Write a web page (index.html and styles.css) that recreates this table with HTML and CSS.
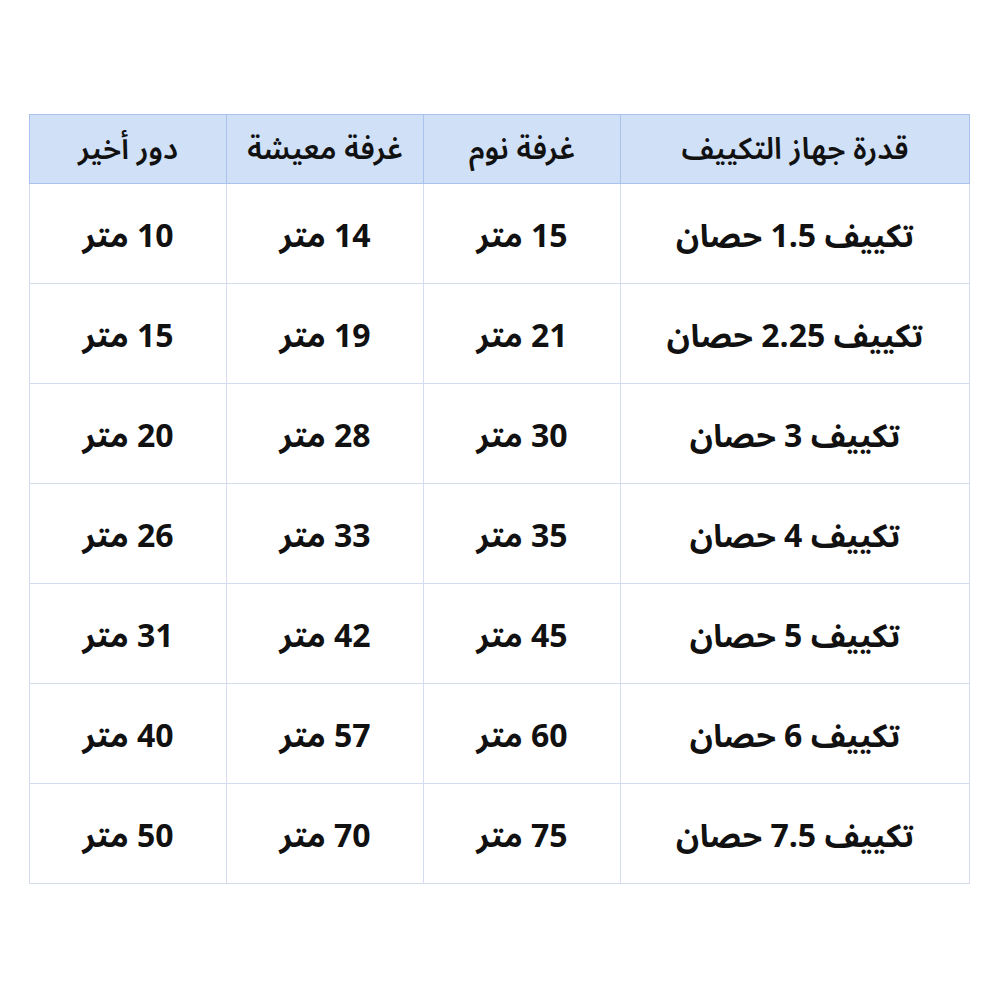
FILE: index.html
```html
<!DOCTYPE html>
<html lang="ar" dir="rtl">
<head>
<meta charset="utf-8">
<link rel="stylesheet" href="styles.css">
</head>
<body>
<div class="page">
<table class="ac-table">
  <colgroup>
    <col class="c-main"><col class="c-sub"><col class="c-sub"><col class="c-sub">
  </colgroup>
  <thead>
    <tr><th>قدرة جهاز التكييف</th><th>غرفة نوم</th><th>غرفة معيشة</th><th>دور أخير</th></tr>
  </thead>
  <tbody>
    <tr><td>تكييف 1.5 حصان</td><td>15 متر</td><td>14 متر</td><td>10 متر</td></tr>
    <tr><td>تكييف 2.25 حصان</td><td>21 متر</td><td>19 متر</td><td>15 متر</td></tr>
    <tr><td>تكييف 3 حصان</td><td>30 متر</td><td>28 متر</td><td>20 متر</td></tr>
    <tr><td>تكييف 4 حصان</td><td>35 متر</td><td>33 متر</td><td>26 متر</td></tr>
    <tr><td>تكييف 5 حصان</td><td>45 متر</td><td>42 متر</td><td>31 متر</td></tr>
    <tr><td>تكييف 6 حصان</td><td>60 متر</td><td>57 متر</td><td>40 متر</td></tr>
    <tr><td>تكييف 7.5 حصان</td><td>75 متر</td><td>70 متر</td><td>50 متر</td></tr>
  </tbody>
</table>
</div>
</body>
</html>
```
FILE: styles.css
```css
html, body {
  margin: 0;
  padding: 0;
  background: #ffffff;
}
.page {
  padding: 114px 30px 0 30px;
}
.ac-table {
  width: 940px;
  border-collapse: collapse;
  table-layout: fixed;
  direction: rtl;
  font-family: "Noto Sans Arabic", "DejaVu Sans", sans-serif;
  color: #111111;
}
.c-main { width: 349px; }
.c-sub { width: 197px; }
.ac-table th {
  height: 69px;
  background: #cfe0f7;
  border: 1px solid #a9c3ec;
  font-size: 30px;
  font-weight: 600;
  line-height: 40px;
  text-align: center;
  padding: 2px 0 0 0;
  box-sizing: border-box;
}
.ac-table td {
  height: 100px;
  border: 1px solid #d6dcf0;
  font-size: 32px;
  font-weight: 700;
  line-height: 40px;
  text-align: center;
  padding: 6px 0 0 0;
  box-sizing: border-box;
}
```
